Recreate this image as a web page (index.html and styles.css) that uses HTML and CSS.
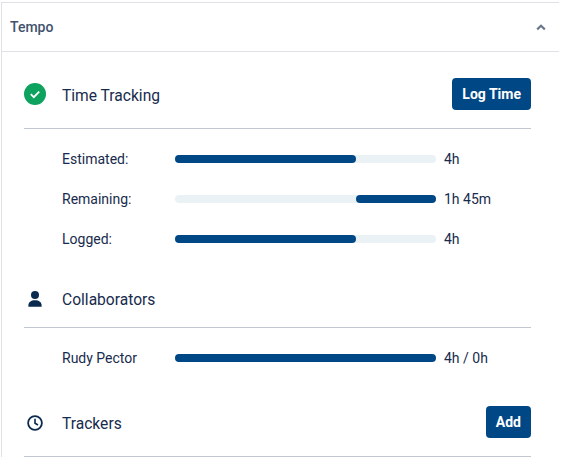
FILE: index.html
```html
<!doctype html>
<html lang="en">
  <head>
    <meta charset="UTF-8" />
    <meta name="viewport" content="width=device-width, initial-scale=1.0" />
    <title>Tempo</title>
    <link rel="stylesheet" href="styles.css">
  </head>
  <body>
    <div class="panel">
      <div class="panel-header">
        <span class="panel-title">Tempo</span>
        <svg class="chevron" width="10" height="7" viewBox="0 0 10 7"><path d="M1.2 5.4 5 1.8l3.8 3.6" fill="none" stroke="#6b778c" stroke-width="2.2"/></svg>
      </div>
      <div class="panel-body">
        <div class="section-head head-time">
          <svg class="icon icon-check" width="22" height="22" viewBox="0 0 22 22"><circle cx="11" cy="11" r="11" fill="#0da35e"/><path d="M6.8 11.2l3 3 5.4-5.6" fill="none" stroke="#fff" stroke-width="1.8"/></svg>
          <span class="section-title">Time Tracking</span>
          <button class="btn">Log Time</button>
        </div>
        <div class="rows">
          <div class="row">
            <span class="row-label">Estimated:</span>
            <div class="track"><div class="fill" style="width: 181px"></div></div>
            <span class="row-value">4h</span>
          </div>
          <div class="row">
            <span class="row-label">Remaining:</span>
            <div class="track"><div class="fill" style="width: 80px; margin-left: 181px"></div></div>
            <span class="row-value">1h 45m</span>
          </div>
          <div class="row">
            <span class="row-label">Logged:</span>
            <div class="track"><div class="fill" style="width: 181px"></div></div>
            <span class="row-value">4h</span>
          </div>
        </div>
        <div class="section-head head-collab">
          <svg class="icon" width="22" height="16" viewBox="0 0 22 16"><circle cx="11" cy="4" r="4" fill="#0a2a4f"/><path d="M4.4 15.8v-1.6c0-3 2.6-5 6.6-5s6.6 2 6.6 5v1.6z" fill="#0a2a4f"/></svg>
          <span class="section-title">Collaborators</span>
        </div>
        <div class="rows rows-collab">
          <div class="row">
            <span class="row-label">Rudy Pector</span>
            <div class="track"><div class="fill" style="width: 261px"></div></div>
            <span class="row-value">4h / 0h</span>
          </div>
        </div>
        <div class="section-head head-trackers">
          <svg class="icon" width="22" height="16" viewBox="0 0 22 16"><circle cx="11" cy="8" r="6.9" fill="none" stroke="#0a2a4f" stroke-width="1.8"/><path d="M11 3.8V8.2l3 1.8" fill="none" stroke="#0a2a4f" stroke-width="1.6"/></svg>
          <span class="section-title">Trackers</span>
          <button class="btn">Add</button>
        </div>
      </div>
    </div>
  </body>
</html>
```

FILE: styles.css
```css
html,
body {
  height: 100%;
  overflow: hidden;
}
body {
  margin: 0;
  background: #fff;
  color: #172b4d;
  font-family: Roboto, "Noto Sans", sans-serif;
}
.panel {
  margin: 2px 2px 0 1px;
  border-top: 1px solid #dfe1e6;
  border-left: 1px solid #dfe1e6;
}
.panel-header {
  display: flex;
  align-items: center;
  justify-content: space-between;
  height: 48px;
  padding: 0 13px 0 8px;
  border-bottom: 1px solid #dfe1e6;
}
.panel-title {
  color: #42526e;
  font-size: 14px;
  font-weight: 500;
}
.panel-body {
  padding: 0 28px 0 22px;
}
.section-head {
  display: flex;
  align-items: center;
  border-bottom: 1px solid #c1c7d0;
}
.head-time {
  height: 66px;
  padding-top: 10px;
}
.head-collab {
  height: 44px;
  padding-bottom: 6px;
}
.head-trackers {
  height: 60px;
  padding-bottom: 3px;
}
.icon {
  flex: none;
  margin-right: 16px;
}
.icon-check {
  margin-bottom: 2px;
}
.section-title {
  flex: 1;
  padding-top: 2px;
  font-size: 15.6px;
}
.btn {
  height: 32px;
  margin-bottom: 2px;
  padding: 0 10px;
  border: none;
  border-radius: 4px;
  background: #004785;
  color: #fff;
  font-family: inherit;
  font-size: 14px;
  font-weight: 700;
}
.rows {
  display: flex;
  flex-direction: column;
  gap: 16px;
  padding: 18px 0 26px 38px;
}
.rows-collab {
  padding-bottom: 23px;
}
.row {
  display: flex;
  align-items: center;
  height: 24px;
}
.row-label {
  width: 113px;
  font-size: 14px;
}
.track {
  width: 261px;
  height: 8px;
  border-radius: 4px;
  background: #ebf2f5;
}
.fill {
  height: 8px;
  border-radius: 4px;
  background: #004785;
}
.row-value {
  margin-left: 8px;
  font-size: 14px;
}
```
